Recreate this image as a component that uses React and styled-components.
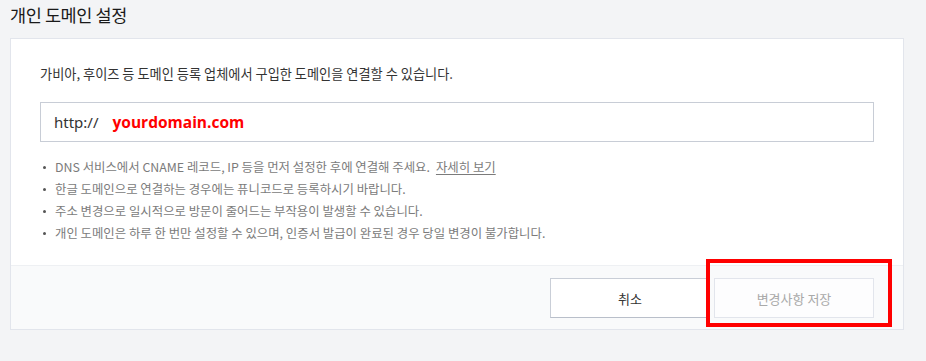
import React from "react";
import styled, { createGlobalStyle } from "styled-components";

const Global = createGlobalStyle`
  html, body { margin: 0; padding: 0; background: #f3f4f6; }
  body { font-family: "Noto Sans CJK KR", "Noto Sans", sans-serif; }
  * { box-sizing: border-box; }
`;

const Page = styled.div`
  width: 926px;
  height: 361px;
  padding: 0 22px 0 10px;
  overflow: hidden;
`;

const Title = styled.h1`
  margin: 0;
  padding: 2px 0 0 0;
  height: 38px;
  font-size: 17.5px;
  font-weight: 400;
  line-height: 26px;
  color: #1a1a1a;
  letter-spacing: -0.4px;
`;

const Card = styled.section`
  background: #fff;
  border: 1px solid #e2e5ec;
  width: 894px;
`;

const Body = styled.div`
  padding: 25px 29px 21px 29px;
`;

const Desc = styled.p`
  margin: 0 0 18px 0;
  font-size: 13.2px;
  line-height: 20px;
  color: #333;
`;

const InputBox = styled.div`
  display: flex;
  align-items: center;
  height: 40px;
  border: 1px solid #c8cdd6;
  padding: 0 13px;
  gap: 14px;
`;

const Prefix = styled.span`
  font-family: "Noto Sans", "Liberation Sans", sans-serif;
  font-size: 15px;
  color: #333;
`;

const Domain = styled.span`
  font-family: "Open Sans", "Liberation Sans", sans-serif;
  font-weight: 700;
  font-size: 15.5px;
  color: #ff0000;
`;

const Notes = styled.ul`
  list-style: none;
  margin: 14px 0 0 0;
  padding: 0;
`;

const Note = styled.li`
  position: relative;
  padding-left: 15px;
  font-size: 12.4px;
  line-height: 22px;
  color: #7b7b7b;
  &::before {
    content: "";
    position: absolute;
    left: 3px;
    top: 10px;
    width: 3px;
    height: 3px;
    border-radius: 50%;
    background: #555;
  }
`;

const More = styled.a`
  margin-left: 6px;
  color: #7b7b7b;
  text-decoration: underline;
  text-underline-offset: 2px;
`;

const Footer = styled.div`
  position: relative;
  display: flex;
  justify-content: flex-end;
  gap: 4px;
  padding: 12px 29px 11px 0;
  background: #f9fafb;
  border-top: 1px solid #eef0f3;
`;

const Button = styled.button`
  width: 160px;
  height: 40px;
  font-family: inherit;
  font-size: 13px;
  background: ${(p) => (p.$disabled ? "#fdfdfe" : "#fff")};
  color: ${(p) => (p.$disabled ? "#a9a9a9" : "#333")};
  border: 1px solid ${(p) => (p.$disabled ? "#e2e5ec" : "#c9ced7")};
  border-bottom-color: ${(p) => (p.$disabled ? "#e2e5ec" : "#b9bfca")};
  cursor: pointer;
`;

const Highlight = styled.div`
  position: absolute;
  right: 11px;
  top: -7px;
  width: 186px;
  height: 68px;
  border: 4px solid #ff0000;
  pointer-events: none;
`;

const notes = [
  "DNS 서비스에서 CNAME 레코드, IP 등을 먼저 설정한 후에 연결해 주세요.",
  "한글 도메인으로 연결하는 경우에는 퓨니코드로 등록하시기 바랍니다.",
  "주소 변경으로 일시적으로 방문이 줄어드는 부작용이 발생할 수 있습니다.",
  "개인 도메인은 하루 한 번만 설정할 수 있으며, 인증서 발급이 완료된 경우 당일 변경이 불가합니다.",
];

export default function App() {
  return (
    <>
      <Global />
      <Page>
        <Title>개인 도메인 설정</Title>
        <Card>
          <Body>
            <Desc>가비아, 후이즈 등 도메인 등록 업체에서 구입한 도메인을 연결할 수 있습니다.</Desc>
            <InputBox>
              <Prefix>http://</Prefix>
              <Domain>yourdomain.com</Domain>
            </InputBox>
            <Notes>
              {notes.map((n, i) => (
                <Note key={i}>
                  {n}
                  {i === 0 && <More href="#">자세히 보기</More>}
                </Note>
              ))}
            </Notes>
          </Body>
          <Footer>
            <Button>취소</Button>
            <Button $disabled>변경사항 저장</Button>
            <Highlight />
          </Footer>
        </Card>
      </Page>
    </>
  );
}
